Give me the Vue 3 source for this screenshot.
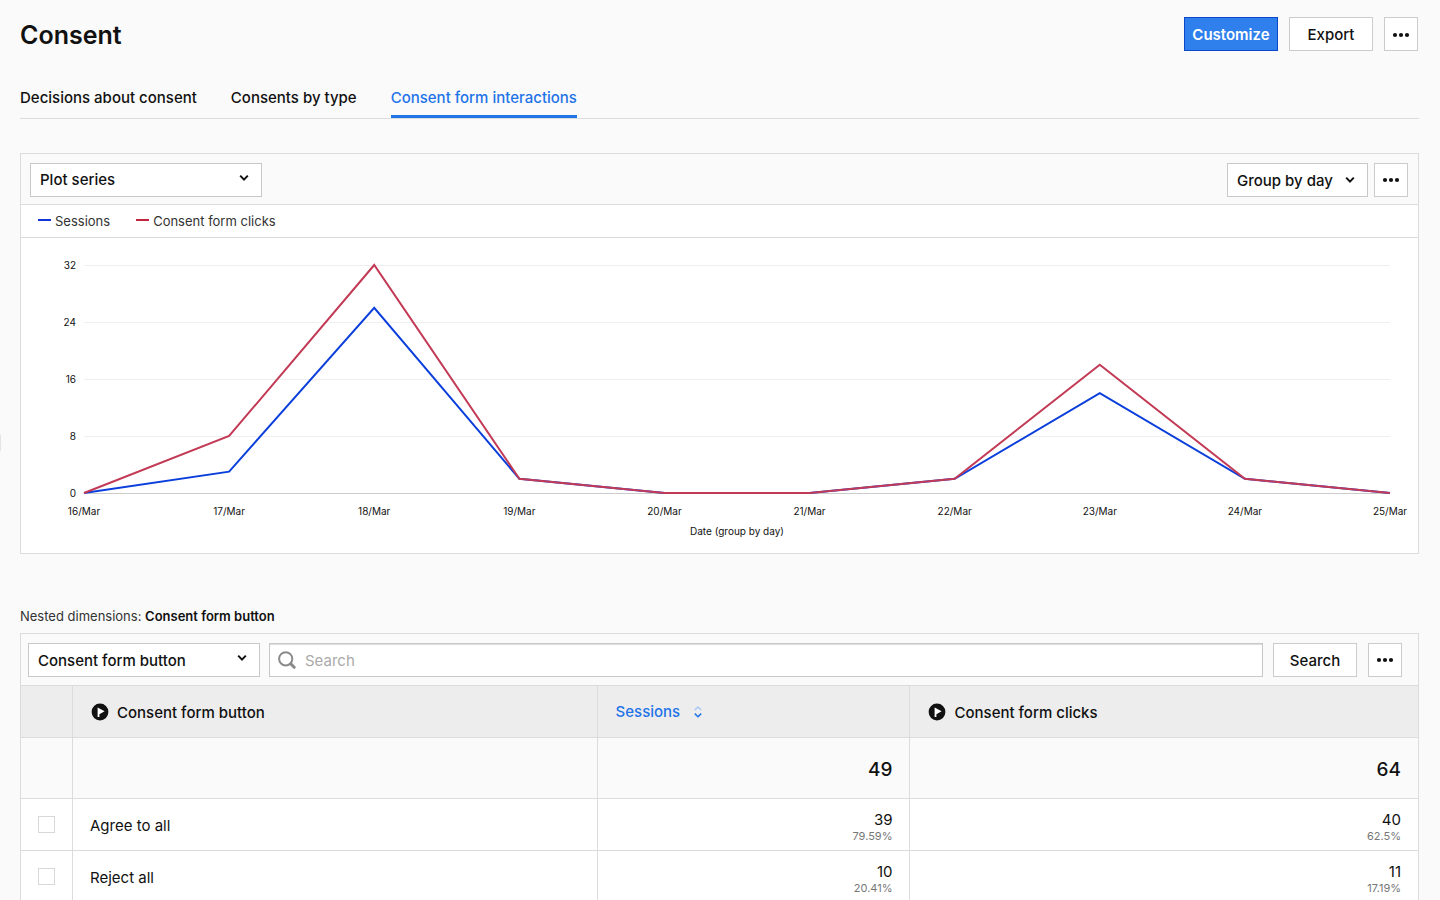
<script setup>
import { ref, computed } from 'vue'

const tabs = ['Decisions about consent', 'Consents by type', 'Consent form interactions']
const activeTab = ref(2)
const query = ref('')

const days = ['16/Mar', '17/Mar', '18/Mar', '19/Mar', '20/Mar', '21/Mar', '22/Mar', '23/Mar', '24/Mar', '25/Mar']
const ticks = [32, 24, 16, 8, 0]
const series = [
  { name: 'Sessions', key: 'sessions', values: [0, 3, 26, 2, 0, 0, 2, 14, 2, 0] },
  { name: 'Consent form clicks', key: 'clicks', values: [0, 8, 32, 2, 0, 0, 2, 18, 2, 0] }
]
const lines = computed(() =>
  series.map((s) => ({
    key: s.key,
    points: s.values.map((v, i) => `${i * 100},${(32 - v) * 10}`).join(' ')
  }))
)

const rows = ref([
  { label: 'Agree to all', checked: false, sessions: '39', sessionsShare: '79.59%', clicks: '40', clicksShare: '62.5%' },
  { label: 'Reject all', checked: false, sessions: '10', sessionsShare: '20.41%', clicks: '11', clicksShare: '17.19%' }
])
</script>

<template>
  <main class="page">
    <span class="edge-handle"></span>
    <header class="top">
      <h1>Consent</h1>
      <div class="actions">
        <button class="btn primary" type="button">Customize</button>
        <button class="btn export" type="button">Export</button>
        <button class="btn more" type="button" aria-label="More actions">
          <svg viewBox="0 0 18 6" width="18" height="6"><circle cx="3" cy="3" r="2.1" /><circle cx="9" cy="3" r="2.1" /><circle cx="15" cy="3" r="2.1" /></svg>
        </button>
      </div>
    </header>

    <nav class="tabs">
      <a v-for="(t, i) in tabs" :key="t" href="#" :class="{ active: i === activeTab }" @click.prevent="activeTab = i">{{ t }}</a>
    </nav>

    <section class="panel">
      <div class="toolbar">
        <div class="select wide">
          <select aria-label="Plot series"><option>Plot series</option></select>
          <svg viewBox="0 0 10 8" width="10" height="8"><path d="M1.2 1.6 5 5.6 8.8 1.6" /></svg>
        </div>
        <div class="right">
          <div class="select group">
            <select aria-label="Group by"><option>Group by day</option></select>
            <svg viewBox="0 0 10 8" width="10" height="8"><path d="M1.2 1.6 5 5.6 8.8 1.6" /></svg>
          </div>
          <button class="btn more" type="button" aria-label="Chart options">
            <svg viewBox="0 0 18 6" width="18" height="6"><circle cx="3" cy="3" r="2.1" /><circle cx="9" cy="3" r="2.1" /><circle cx="15" cy="3" r="2.1" /></svg>
          </button>
        </div>
      </div>
      <ul class="legend">
        <li v-for="s in series" :key="s.key" :class="s.key">{{ s.name }}</li>
      </ul>
      <div class="chart">
        <ol class="y-axis">
          <li v-for="t in ticks" :key="t"><span>{{ t }}</span></li>
        </ol>
        <div class="plot">
          <div class="grid-lines"><i v-for="t in ticks" :key="t"></i></div>
          <svg viewBox="0 0 900 320" preserveAspectRatio="none">
            <polyline v-for="l in lines" :key="l.key" :class="l.key" :points="l.points" />
          </svg>
        </div>
        <ol class="x-axis">
          <li v-for="d in days" :key="d"><span>{{ d }}</span></li>
        </ol>
        <p class="caption">Date (group by day)</p>
      </div>
    </section>

    <p class="nested">Nested dimensions: <strong>Consent form button</strong></p>

    <section class="panel">
      <form class="toolbar search" @submit.prevent>
        <div class="select wide">
          <select aria-label="Dimension"><option>Consent form button</option></select>
          <svg viewBox="0 0 10 8" width="10" height="8"><path d="M1.2 1.6 5 5.6 8.8 1.6" /></svg>
        </div>
        <label class="field">
          <svg viewBox="0 0 18 18" width="18" height="18"><circle cx="7.7" cy="7.8" r="6.6" /><path class="handle" d="m12.8 12.9 3.4 3.4" /></svg>
          <input v-model="query" type="text" placeholder="Search" aria-label="Search" />
        </label>
        <button class="btn find" type="submit">Search</button>
        <button class="btn more" type="button" aria-label="Table options">
          <svg viewBox="0 0 18 6" width="18" height="6"><circle cx="3" cy="3" r="2.1" /><circle cx="9" cy="3" r="2.1" /><circle cx="15" cy="3" r="2.1" /></svg>
        </button>
      </form>
      <table>
        <colgroup><col class="c-check" /><col class="c-name" /><col class="c-sessions" /><col /></colgroup>
        <thead>
          <tr>
            <td></td>
            <th scope="col">
              <span class="head">
                <svg class="flag" viewBox="0 0 18 18" width="18" height="18"><circle cx="9" cy="9" r="8.4" /><path class="cut" d="M6.6 4.4 13.6 8.3 8.4 11.2V14H6.6Z" /></svg>
                Consent form button
              </span>
            </th>
            <th scope="col">
              <button class="sort" type="button">Sessions
                <svg viewBox="0 0 8 12" width="8" height="12"><path class="dim" d="M.8 4 4 1 7.2 4" /><path d="M.8 7.6 4 10.8 7.2 7.6" /></svg>
              </button>
            </th>
            <th scope="col">
              <span class="head">
                <svg class="flag" viewBox="0 0 18 18" width="18" height="18"><circle cx="9" cy="9" r="8.4" /><path class="cut" d="M6.6 4.4 13.6 8.3 8.4 11.2V14H6.6Z" /></svg>
                Consent form clicks
              </span>
            </th>
          </tr>
        </thead>
        <tbody>
          <tr class="total">
            <td></td>
            <td></td>
            <td class="num">49</td>
            <td class="num">64</td>
          </tr>
          <tr v-for="r in rows" :key="r.label">
            <td class="tick"><input v-model="r.checked" type="checkbox" :aria-label="r.label" /></td>
            <td>{{ r.label }}</td>
            <td class="num">{{ r.sessions }}<small>{{ r.sessionsShare }}</small></td>
            <td class="num">{{ r.clicks }}<small>{{ r.clicksShare }}</small></td>
          </tr>
        </tbody>
      </table>
    </section>
  </main>
</template>

<style>
body {
  margin: 0;
  background: #fafafa;
}
</style>

<style scoped>
.page {
  position: relative;
  box-sizing: border-box;
  height: 100vh;
  overflow: hidden;
  padding: 17px 21px 0 20px;
  font: 400 15px/20px Inter, "Liberation Sans", sans-serif;
  color: #111;
}
.page *,
.page *::before {
  box-sizing: border-box;
}
.edge-handle {
  position: absolute;
  left: 0;
  top: 435px;
  width: 1px;
  height: 16px;
  background: #e4e4e4;
}
h1,
p,
ul,
ol {
  margin: 0;
  padding: 0;
  list-style: none;
}
button,
select,
input {
  margin: 0;
  font: inherit;
  color: inherit;
}
.top {
  display: flex;
  justify-content: space-between;
}
h1 {
  font-size: 25px;
  line-height: 36px;
  font-weight: 600;
}
.actions {
  display: flex;
  gap: 11px;
  padding-right: 1px;
}
.btn {
  display: flex;
  align-items: center;
  justify-content: center;
  height: 34px;
  padding: 0;
  border: 1px solid #ccc;
  background: #fff;
  font-size: 15px;
  font-weight: 500;
}
.actions .btn,
.btn.find {
  padding-top: 2px;
}
.btn.primary {
  width: 94px;
  border-color: #0c47c9;
  background: #2f80ed;
  color: #fff;
  font-weight: 600;
}
.export,
.find {
  width: 84px;
}
.find {
  margin: 0 2px 0 1px;
}
.more {
  width: 34px;
}
.more svg {
  fill: #111;
}
.tabs {
  display: flex;
  gap: 34px;
  margin-top: 35px;
  border-bottom: 1px solid #dcdcdc;
}
.tabs a {
  height: 30px;
  border-bottom: 3px solid transparent;
  color: #111;
  font-size: 15px;
  font-weight: 500;
  text-decoration: none;
}
.tabs a.active {
  border-color: #1f74e8;
  color: #1f74e8;
}
.panel {
  border: 1px solid #dcdcdc;
}
.tabs + .panel {
  margin-top: 34px;
}
.toolbar {
  display: flex;
  justify-content: space-between;
  padding: 9px 10px 7px 9px;
}
.right {
  display: flex;
  gap: 6px;
}
.select {
  position: relative;
}
.select select {
  width: 100%;
  height: 34px;
  padding: 0 9px;
  border: 1px solid #c8c8c8;
  border-radius: 0;
  background: #fff;
  font-size: 15px;
  font-weight: 500;
  appearance: none;
}
.group select,
.search select {
  padding-top: 2px;
}
.select svg {
  position: absolute;
  right: 13px;
  top: 11px;
  fill: none;
  stroke: #111;
  stroke-width: 2;
  pointer-events: none;
}
.group svg {
  top: 13px;
}
.wide {
  width: 232px;
}
.group {
  width: 141px;
}
.legend {
  display: flex;
  gap: 26px;
  height: 34px;
  padding: 0 17px;
  border-top: 1px solid #dcdcdc;
  border-bottom: 1px solid #dcdcdc;
  background: #fff;
  font-size: 13px;
  line-height: 32px;
  color: #333;
}
.legend li {
  display: flex;
  gap: 4px;
}
.legend li::before {
  content: "";
  width: 13px;
  height: 2px;
  margin-top: 14px;
  background: #1236d6;
}
.legend li.clicks::before {
  background: #c0243f;
}
.chart {
  display: grid;
  grid-template: 228px 28px 20px / 55px 1fr;
  column-gap: 8px;
  padding: 27px 28px 12px 0;
  background: #fff;
  font-size: 10px;
  line-height: 16px;
}
.y-axis {
  display: flex;
  flex-direction: column;
  justify-content: space-between;
  text-align: right;
}
.y-axis li {
  display: flex;
  align-items: center;
  justify-content: flex-end;
  height: 0;
}
.plot {
  position: relative;
}
.grid-lines {
  display: flex;
  flex-direction: column;
  justify-content: space-between;
  height: 229px;
}
.grid-lines i {
  height: 1px;
  background: #efefef;
}
.grid-lines i:last-child {
  background: #ccc;
}
.plot svg {
  position: absolute;
  inset: 0;
  width: 100%;
  height: 100%;
  overflow: visible;
}
.plot polyline {
  fill: none;
  stroke: #0b3fdc;
  stroke-width: 2px;
  vector-effect: non-scaling-stroke;
}
.plot polyline.clicks {
  stroke: #c23a55;
}
.x-axis {
  grid-column: 2;
  display: flex;
  justify-content: space-between;
  padding-top: 10px;
}
.x-axis li {
  display: flex;
  justify-content: center;
  width: 0;
}
.caption {
  grid-column: 2;
  padding-top: 2px;
  text-align: center;
}
.nested {
  margin-top: 52px;
  margin-bottom: 7px;
  font-size: 13px;
  color: #333;
}
.nested strong {
  font-weight: 600;
  color: #111;
}
.toolbar.search {
  padding: 9px 16px 8px 7px;
  gap: 9px;
}
.field {
  position: relative;
  flex: 1;
}
.field input {
  width: 100%;
  height: 34px;
  padding: 0 35px;
  border: 1px solid #c8c8c8;
  border-radius: 0;
  background: #fff;
  box-shadow: inset 0 1px 1px #ddd;
}
.field input::placeholder {
  color: #aaa;
  opacity: 1;
}
.field svg {
  position: absolute;
  left: 9px;
  top: 8px;
  fill: none;
  stroke: #8a8a8a;
  stroke-width: 2;
}
.field .handle {
  stroke-width: 3;
  stroke-linecap: round;
}
table {
  width: 100%;
  table-layout: fixed;
  border-collapse: separate;
  border-spacing: 0;
}
.c-check {
  width: 52px;
}
.c-name {
  width: 37.55%;
}
.c-sessions {
  width: 22.4%;
}
th,
td {
  height: 52px;
  padding: 2px 17px 0;
  border-top: 1px solid #dcdcdc;
  border-right: 1px solid #dcdcdc;
  background: #fff;
  text-align: left;
}
th:last-child,
td:last-child {
  border-right: 0;
}
thead th,
thead td {
  background: #ededed;
  padding: 0 18px;
  font-weight: 500;
}
.total td {
  height: 61px;
  padding-top: 4px;
  background: #fafafa;
  font-size: 19px;
  font-weight: 500;
}
.head {
  display: flex;
  align-items: flex-start;
  gap: 8px;
  padding-top: 2px;
}
.flag {
  fill: #111;
}
.flag .cut {
  fill: #fff;
}
.sort {
  display: flex;
  align-items: center;
  gap: 14px;
  padding: 0;
  border: 0;
  background: none;
  color: #1f74e8;
}
.sort svg {
  fill: none;
  stroke: #1f74e8;
  stroke-width: 1.5;
}
.sort .dim {
  stroke: #a9c9f7;
}
td.num {
  text-align: right;
}
small {
  display: block;
  font-size: 11px;
  line-height: 12px;
  color: #777;
}
td.tick {
  padding: 0;
  text-align: center;
}
.tick input {
  display: block;
  width: 17px;
  height: 17px;
  margin: 0 auto;
  border: 1px solid #d8d8d8;
  background: #fff;
  appearance: none;
}
.tick input:checked {
  background: #2f80ed;
}
</style>
